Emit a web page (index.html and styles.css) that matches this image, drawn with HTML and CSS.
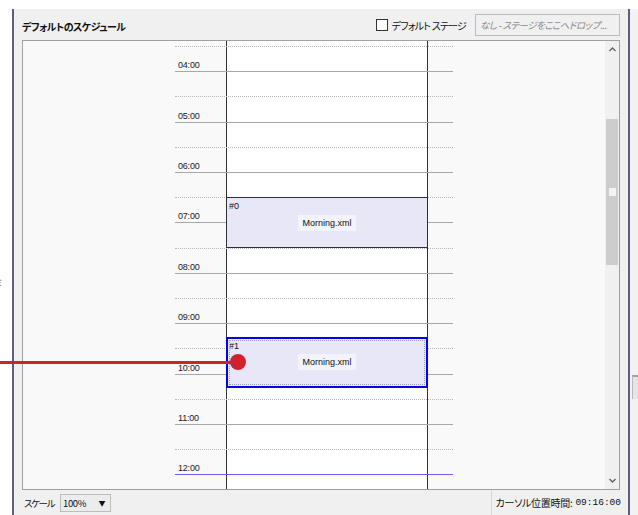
FILE: index.html
```html
<!DOCTYPE html>
<html lang="ja">
<head>
  <meta charset="UTF-8" />
  <title>デフォルトのスケジュール</title>
  <link rel="stylesheet" href="styles.css">
</head>
<body>
  <div class="gutter"><span class="cut">ミ</span></div>

  <div class="panel">
    <div class="header">
      <span class="title">デフォルトのスケジュール</span>
      <label class="check"><span class="box"></span>デフォルト ステージ</label>
      <div class="drop">なし - ステージをここへドロップ...</div>
    </div>

    <div class="schedule">
      <div class="canvas">
        <div class="column"></div>

        <div class="ruler">
          <div class="slot"><div class="slot-top"><span class="hour">04:00</span></div><div class="slot-bottom"></div></div>
          <div class="slot"><div class="slot-top"><span class="hour">05:00</span></div><div class="slot-bottom"></div></div>
          <div class="slot"><div class="slot-top"><span class="hour">06:00</span></div><div class="slot-bottom"></div></div>
          <div class="slot"><div class="slot-top"><span class="hour">07:00</span></div><div class="slot-bottom"></div></div>
          <div class="slot"><div class="slot-top"><span class="hour">08:00</span></div><div class="slot-bottom"></div></div>
          <div class="slot"><div class="slot-top"><span class="hour">09:00</span></div><div class="slot-bottom"></div></div>
          <div class="slot"><div class="slot-top"><span class="hour">10:00</span></div><div class="slot-bottom"></div></div>
          <div class="slot"><div class="slot-top"><span class="hour">11:00</span></div><div class="slot-bottom"></div></div>
          <div class="slot"><div class="slot-top"><span class="hour">12:00</span></div><div class="slot-bottom now"></div></div>
        </div>

        <div class="blocks">
          <div class="block first">
            <span class="block-id">#0</span>
            <span class="block-name">Morning.xml</span>
          </div>
          <div class="block selected">
            <span class="block-id">#1</span>
            <span class="block-name">Morning.xml</span>
          </div>
        </div>
      </div>

      <div class="scrollbar">
        <div class="arrow">
          <svg width="7" height="5" viewBox="0 0 7 5"><polyline points="0.5,4 3.5,1 6.5,4" fill="none" stroke="#606060" stroke-width="1.3"/></svg>
        </div>
        <div class="track">
          <div class="thumb"><span class="grip"></span></div>
        </div>
        <div class="arrow">
          <svg width="7" height="5" viewBox="0 0 7 5"><polyline points="0.5,1 3.5,4 6.5,1" fill="none" stroke="#606060" stroke-width="1.3"/></svg>
        </div>
      </div>
    </div>

    <div class="footer">
      <div class="scale">
        <span class="scale-label">スケール</span>
        <div class="combo"><span>100%</span><span class="caret">▼</span></div>
      </div>
      <div class="status">カーソル位置時間: <span class="mono">09:16:00</span></div>
    </div>
  </div>

  <div class="side"><div class="grip-box"></div></div>

  <!-- link from the stage list to the selected block -->
  <div class="link-line"></div>
  <div class="link-dot"></div>
</body>
</html>
```

FILE: styles.css
```css
body {
  margin: 0;
  width: 638px;
  height: 515px;
  overflow: hidden;
  display: flex;
  position: relative;
  background: #fff;
  color: #111;
  font-family: "Noto Sans CJK JP", "Liberation Sans", sans-serif;
  font-size: 10px;
  font-feature-settings: "palt";
}
.gutter {
  width: 12px;
  flex: none;
  overflow: hidden;
  padding-top: 276px;
  box-sizing: border-box;
}
.cut {
  display: block;
  margin-left: -5px;
  font-size: 9px;
  color: #777;
}
.panel {
  width: 618px;
  flex: none;
  margin-top: 9px;
  box-sizing: border-box;
  border-left: 2px solid #5f5d80;
  border-right: 2px solid #5f5d80;
  background: #f0f0f0;
  padding: 0 8px;
  display: flex;
  flex-direction: column;
}
.side {
  flex: 1;
  margin-top: 9px;
  background: #f2f2f2;
  padding-top: 366px;
}
.grip-box {
  height: 22px;
  margin-left: 2px;
  border-top: 2px solid #a0a0a8;
  border-left: 1px solid #b8b8c0;
  background: #e4e4ea;
}

/* header */
.header {
  height: 31px;
  display: flex;
  align-items: center;
}
.title {
  font-weight: bold;
  font-size: 10px;
  letter-spacing: -0.6px;
  margin-top: 3px;
  flex: 1;
}
.check {
  display: flex;
  align-items: center;
  font-size: 10px;
  letter-spacing: -0.8px;
  margin-right: 9px;
  margin-top: 1px;
}
.box {
  width: 10px;
  height: 10px;
  border: 1px solid #333;
  background: #fff;
  margin-right: 4px;
}
.drop {
  width: 145px;
  height: 22px;
  box-sizing: border-box;
  border: 1px solid #bcbcbc;
  background: #f0f0f0;
  color: #8a8a8a;
  font-style: italic;
  font-size: 9.5px;
  letter-spacing: -0.5px;
  line-height: 20px;
  padding-left: 4px;
  white-space: nowrap;
  overflow: hidden;
  margin-top: 1px;
}

/* schedule box */
.schedule {
  height: 450px;
  box-sizing: border-box;
  border: 1px solid #a0a0a0;
  display: flex;
}
.canvas {
  flex: 1;
  display: grid;
  overflow: hidden;
  background: #f9f9f9;
}
.canvas > * {
  grid-area: 1 / 1;
}
.column {
  margin-left: 203px;
  width: 202px;
  box-sizing: border-box;
  border-left: 1px solid #303030;
  border-right: 1px solid #303030;
  background: #fff;
}
.ruler {
  margin-left: 152px;
  width: 278px;
  padding-top: 5px;
  font-family: "Liberation Sans", sans-serif;
  font-size: 9px;
  color: #1a1a1a;
  z-index: 1;
}
.slot {
  height: 50.4px;
  display: flex;
  flex-direction: column;
}
.slot-top {
  height: 25.2px;
  box-sizing: border-box;
  border-top: 1px dotted #b8b8b8;
  display: flex;
  align-items: flex-end;
  padding: 0 0 1px 3px;
}
.hour {
  line-height: 10px;
  letter-spacing: -0.2px;
}
.slot-bottom {
  flex: 1;
  border-top: 1px solid #a8a8a8;
}
.slot-bottom.now {
  border-top-color: #6464e6;
}
.blocks {
  margin-left: 203px;
  width: 202px;
  display: flex;
  flex-direction: column;
  font-family: "Liberation Sans", sans-serif;
  font-size: 9px;
  z-index: 2;
}
.block {
  height: 51px;
  box-sizing: border-box;
  background: #e7e7f8;
  border: 1px solid #303030;
  display: flex;
  flex-direction: column;
}
.block.first {
  margin-top: 156px;
}
.block.selected {
  margin-top: 89px;
  border: 2px solid #0000f0;
  outline: 1px dotted #a0a0b8;
  outline-offset: -4px;
}
.block-id {
  line-height: 10px;
  padding: 3px 0 0 2px;
}
.selected .block-id {
  padding: 2px 0 0 1px;
}
.block-name {
  align-self: center;
  margin-top: 4px;
  padding: 3px 4px;
  line-height: 10px;
  background: #f3f3fc;
}
.selected .block-name {
  margin-top: 3px;
}

/* scrollbar */
.scrollbar {
  width: 14px;
  flex: none;
  background: #f0f0f0;
  display: flex;
  flex-direction: column;
}
.arrow {
  height: 17px;
  display: flex;
  align-items: center;
  justify-content: center;
}
.track {
  flex: 1;
}
.thumb {
  margin: 61px 1px 0 1px;
  height: 146px;
  background: #cdcdcd;
  display: flex;
  justify-content: center;
}
.grip {
  margin-top: 69px;
  width: 7px;
  height: 8px;
  background: #f4f4f4;
}

/* footer */
.footer {
  flex: 1;
  display: flex;
  justify-content: space-between;
  font-size: 10px;
}
.scale {
  display: flex;
  align-items: center;
  padding-left: 2px;
}
.scale-label {
  font-size: 9.5px;
  letter-spacing: -1.4px;
}
.combo {
  margin-left: 6px;
  width: 51px;
  height: 18px;
  box-sizing: border-box;
  border: 1px solid #bdbdbd;
  background: #ececec;
  display: flex;
  align-items: center;
  justify-content: space-between;
  padding: 0 5px 0 2px;
  font-size: 9.5px;
  letter-spacing: -0.4px;
}
.caret {
  font-size: 7px;
}
.status {
  display: flex;
  align-items: center;
  border-left: 1px solid #d6d6d6;
  padding-left: 4px;
  margin-right: -1px;
  letter-spacing: -0.3px;
}
.mono {
  font-family: "Liberation Mono", monospace;
  font-size: 9.5px;
  letter-spacing: 0;
  margin-left: 3px;
}

/* connector overlay */
.link-line {
  position: absolute;
  z-index: 5;
  left: 0;
  top: 361px;
  width: 236px;
  height: 3px;
  background: #d0212e;
}
.link-dot {
  position: absolute;
  z-index: 5;
  left: 230px;
  top: 354px;
  width: 16px;
  height: 16px;
  border-radius: 50%;
  background: #d0212e;
}
```
